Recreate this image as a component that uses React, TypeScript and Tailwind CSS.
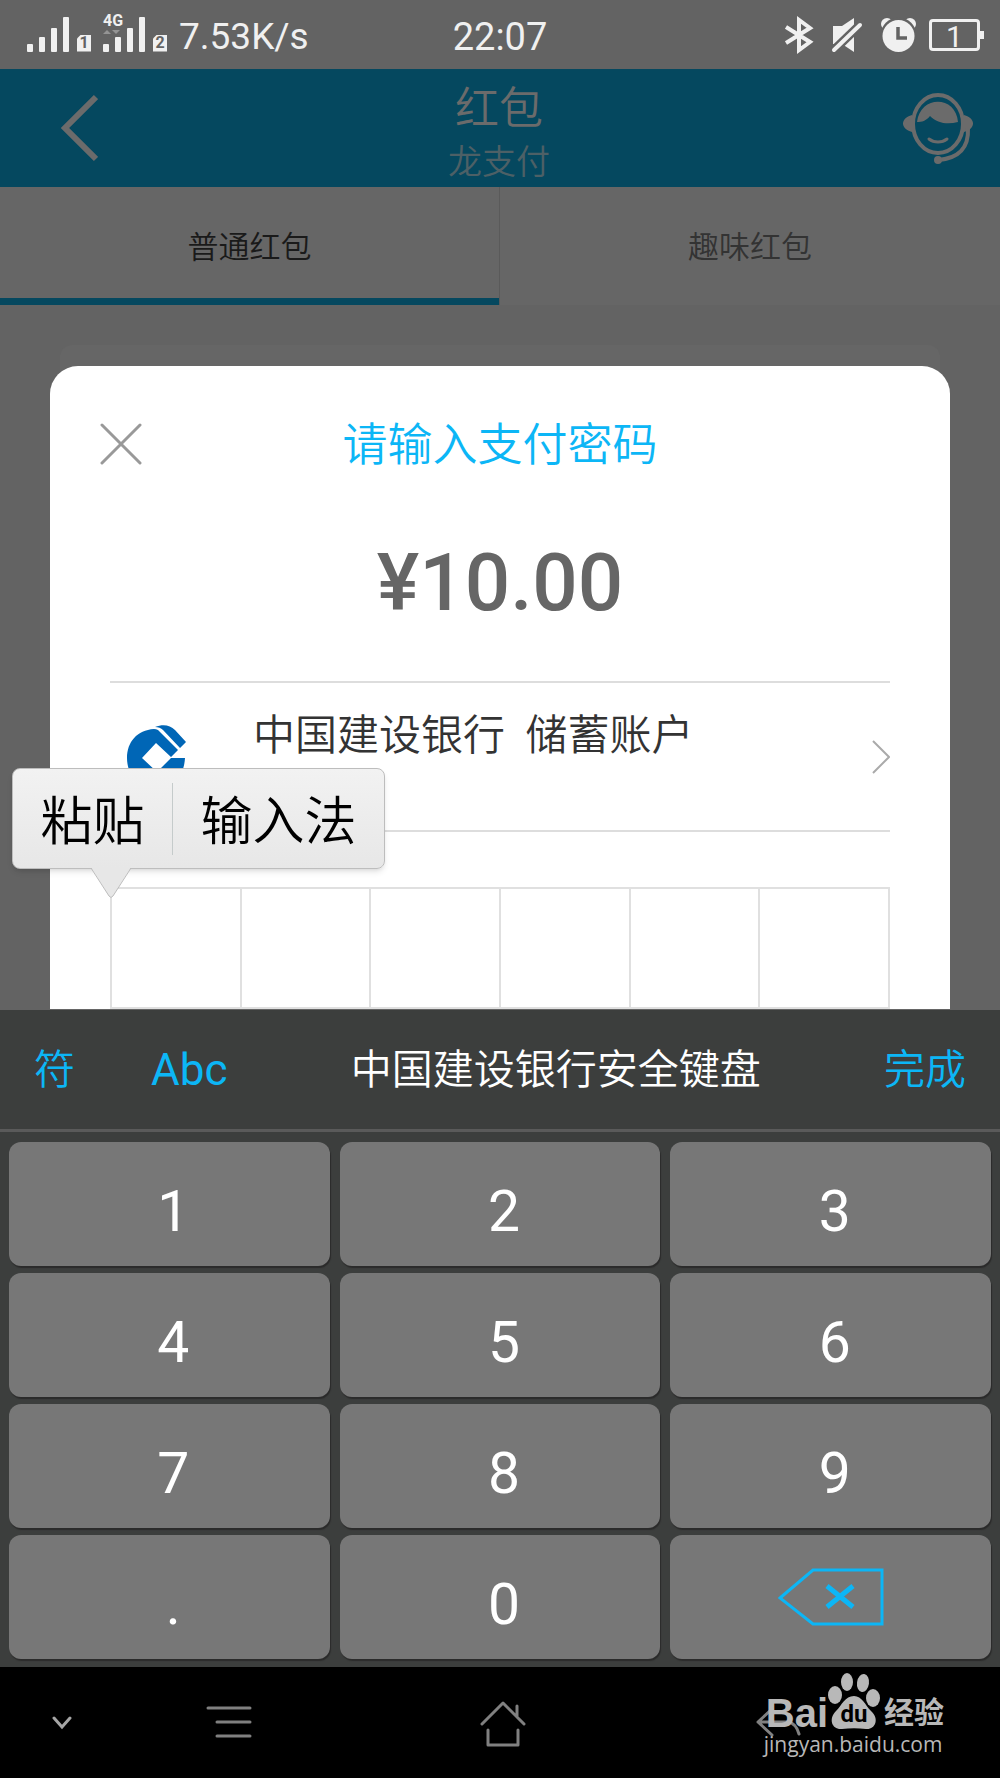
import { useState } from "react";

const KEYS = ["1", "2", "3", "4", "5", "6", "7", "8", "9", ".", "0"];
const PIN_LENGTH = 6;

function SignalBars({ sim, network }: { sim: string; network?: string }) {
    return (
        <span className="relative flex h-9 items-end gap-2">
            <svg width="42" height="36" viewBox="0 0 42 36" fill="currentColor" aria-hidden="true">
                <rect x="0" y="27" width="6" height="8" rx="1" />
                <rect x="12" y="20" width="6" height="15" rx="1" />
                <rect x="24" y="11" width="6" height="24" rx="1" />
                <rect x="36" y="0" width="6" height="35" rx="1" />
                {network && <path d="M0 17l4-4 4 4zM9 13h8l-4 4z" opacity="0.35" />}
            </svg>
            {network && (
                <span className="absolute -top-1 left-0 text-base leading-none font-bold">{network}</span>
            )}
            <span
                className="mb-px flex h-[17px] w-[14px] items-center justify-center bg-[#f0f0f0] text-base leading-none font-bold text-[#636363] [clip-path:polygon(4px_0,100%_0,100%_100%,0_100%,0_4px)]"
            >
                {sim}
            </span>
        </span>
    );
}

function StatusBar() {
    return (
        <div className="grid h-[69px] grid-cols-[1fr_auto_1fr] items-center bg-[#636363] px-4 text-[38px] leading-none font-normal text-[#f0f0f0]">
            <div className="flex items-center gap-3 pl-[11px]">
                <SignalBars sim="1" />
                <SignalBars sim="2" network="4G" />
                <span className="pt-1 text-[37px]">7.53K/s</span>
            </div>
            <span className="pt-1">22:07</span>
            <div className="flex items-center justify-end gap-4">
                <svg width="30" height="40" viewBox="0 0 30 40" fill="none" stroke="currentColor" strokeWidth="4" aria-label="Bluetooth">
                    <path d="M2 12l24 15-11 8V5l11 8L2 28" />
                </svg>
                <svg width="34" height="40" viewBox="0 0 34 40" fill="currentColor" aria-label="Muted">
                    <path d="M3 11h9L24 3v34L12 29H3z" />
                    <path d="M4 35L31 9" stroke="#636363" strokeWidth="9" />
                    <path d="M4 35L30 10" stroke="currentColor" strokeWidth="4" strokeLinecap="round" />
                </svg>
                <svg width="37" height="40" viewBox="0 0 37 40" aria-label="Alarm">
                    <circle cx="7" cy="9" r="6" fill="currentColor" />
                    <circle cx="30" cy="9" r="6" fill="currentColor" />
                    <circle cx="18.5" cy="20.500" r="18" fill="#636363" />
                    <circle cx="18.5" cy="21" r="16" fill="currentColor" />
                    <path d="M18 12v11h9" fill="none" stroke="#636363" strokeWidth="3.500" />
                </svg>
                <span className="-ml-1 flex items-center">
                    <span className="flex h-[32px] w-[51px] items-center justify-center rounded border-3 border-[#f0f0f0] pt-1 text-[30px]">
                        1
                    </span>
                    <span className="h-2 w-1 bg-[#f0f0f0]" />
                </span>
            </div>
        </div>
    );
}

function Header() {
    return (
        <header className="flex h-[118px] items-center justify-between bg-[#05485f] pr-[26px] pl-[60px] text-[#6b6b6b]">
            <button aria-label="返回" className="w-[70px]">
                <svg width="38" height="68" viewBox="0 0 38 68" fill="none" stroke="currentColor" strokeWidth="6">
                    <path d="M36 3L5 34l31 31" />
                </svg>
            </button>
            <div className="pt-2 pr-[34px] text-center">
                <h1 className="text-[44px] leading-[60px]">红包</h1>
                <p className="text-[34px] leading-[46px] text-[#4d6066]">龙支付</p>
            </div>
            <button aria-label="客服">
                <svg width="72" height="76" viewBox="0 0 72 76" fill="none" stroke="currentColor" strokeWidth="4">
                    <ellipse cx="36" cy="34" rx="25" ry="29" />
                    <path d="M10 25c-12 3-12 14 0 17zM62 25c12 3 12 14 0 17z" fill="currentColor" stroke="none" />
                    <path d="M15 32C18 5 54 5 56 32c-11 3-21 1-28-6-4 5-8 6-13 6z" fill="currentColor" stroke="none" />
                    <path d="M27 49c5 4 13 4 18 0" strokeWidth="3" strokeLinecap="round" />
                    <path d="M66 38c1 22-11 30-29 32" />
                    <circle cx="36" cy="70" r="4" fill="currentColor" stroke="none" />
                </svg>
            </button>
        </header>
    );
}

function Tabs() {
    return (
        <nav className="grid h-[118px] grid-cols-2 bg-[#666666] text-[31px]">
            <button className="border-r border-r-[#5a5a5a] text-[#1a1a1a]">
                <span className="flex h-full items-center justify-center border-b-7 border-b-[#05485f] pt-3">
                    普通红包
                </span>
            </button>
            <button className="pt-1 text-[#333333]">趣味红包</button>
        </nav>
    );
}

function BankLogo() {
    return (
        <svg width="60" height="64" viewBox="0 0 60 64" fill="#0066b6" aria-hidden="true">
            <path d="M27 4C10 5 0 17 0 33c0 17 12 30 29 30s28-12 29-30H44L30 47 15 33l14-15 15 14 7-7L31 5q-2-1-4-1z" />
            <path d="M28 2c8-3 15-2 20 3l11 12-6 6L36 5q-3-3-8-3z" />
        </svg>
    );
}

function PasteMenu() {
    return (
        <div className="absolute top-[402px] left-[-38px] flex h-[101px] w-[373px] items-center rounded-lg border border-[#bdbdbd] bg-linear-to-b from-[#f2f2f2] to-[#e7e7e7] text-[52px] leading-[60px] text-black shadow-md">
            <button className="h-18 w-[160px] border-r border-[#c5cbcb] pt-2">粘贴</button>
            <button className="flex-1 pt-2">输入法</button>
            <svg className="absolute top-[98px] left-[77px]" width="42" height="34" viewBox="0 0 42 34">
                <path d="M1 0h40L23 29q-2 3-4 0z" fill="#e7e7e7" />
                <path d="M1 1l18 28q2 3 4 0L41 1" fill="none" stroke="#bdbdbd" />
            </svg>
        </div>
    );
}

function PaymentDialog({ pin }: { pin: string }) {
    return (
        <section role="dialog" aria-label="请输入支付密码" className="relative rounded-t-[28px] bg-white pt-12">
            <div className="flex h-[60px] items-center justify-between px-[50px]">
                <button aria-label="关闭">
                    <svg width="42" height="42" viewBox="0 0 42 42" stroke="#999999" strokeWidth="3" strokeLinecap="round">
                        <path d="M2 2l38 38M40 2L2 40" />
                    </svg>
                </button>
                <h2 className="pt-1 pr-[42px] text-[45px] leading-[60px] text-[#0cb6f6]">请输入支付密码</h2>
                <span />
            </div>
            <p className="mt-[69px] text-center text-[80px] leading-[80px] font-medium text-[#666666]">¥10.00</p>
            <div className="mx-[60px] mt-[58px]">
                <button className="flex h-[151px] w-full items-center border-y-2 border-[#dddddd] pl-[17px] text-left">
                    <BankLogo />
                    <span className="mt-7 ml-[66px] flex-1 self-start text-[42px] leading-[50px] whitespace-pre text-[#333333]">
                        中国建设银行{"  "}储蓄账户
                    </span>
                    <svg width="18" height="34" viewBox="0 0 18 34" fill="none" stroke="#aaaaaa" strokeWidth="2">
                        <path d="M1 1l16 16L1 33" />
                    </svg>
                </button>
                <div className="mt-[55px] grid grid-cols-6 border-2 border-r-0 border-[#e0e0e0]">
                    {Array.from({ length: PIN_LENGTH }, (_, i) => (
                        <input
                            key={i}
                            type="password"
                            readOnly
                            value={pin[i] ?? ""}
                            aria-label={`密码第${i + 1}位`}
                            className="h-[118px] w-full min-w-0 border-r-2 border-[#e0e0e0] text-center text-[45px] outline-none"
                        />
                    ))}
                </div>
            </div>
            <PasteMenu />
        </section>
    );
}

function Keyboard({ onKey, onDelete }: { onKey: (key: string) => void; onDelete: () => void }) {
    return (
        <section className="bg-[#3c3e3d]">
            <div className="flex h-[122px] items-center border-b-3 border-[#5a5a5a] px-[34px] text-[41px] leading-[48px] text-[#0cb6f6]">
                <button className="w-[117px] text-left">符</button>
                <button className="text-[44px] font-normal">Abc</button>
                <span className="flex-1 text-center text-white">中国建设银行安全键盘</span>
                <button>完成</button>
            </div>
            <div className="grid grid-cols-3 gap-x-[10px] gap-y-[7px] px-[9px] pt-[10px] pb-2">
                {KEYS.map((key) => (
                    <button
                        key={key}
                        onClick={() => onKey(key)}
                        className="flex h-[124px] items-center justify-center rounded-[12px] bg-[#777777] pt-[14px] pl-2 text-[57px] leading-none font-normal text-white shadow-[1px_2px_1px_#2b2b2b]"
                    >
                        {key}
                    </button>
                ))}
                <button
                    aria-label="删除"
                    onClick={onDelete}
                    className="flex h-[124px] items-center justify-center rounded-[12px] bg-[#777777] shadow-[1px_2px_1px_#2b2b2b]"
                >
                    <svg width="106" height="58" viewBox="0 0 106 58" fill="none" stroke="#0cb6f6">
                        <path d="M2 30L35 2h69v54H35z" strokeWidth="3" />
                        <path d="M49 18l26 21M75 18L49 39" strokeWidth="5" />
                    </svg>
                </button>
            </div>
        </section>
    );
}

function Watermark() {
    return (
        <div className="absolute right-14 bottom-5 text-[#b8b8b8]">
            <div className="flex items-end pl-[2px]">
                <span className="font-[Liberation_Sans] text-[40px] leading-[34px] font-bold">Bai</span>
                <span className="relative">
                    <svg width="52" height="58" viewBox="0 0 52 58" fill="currentColor" aria-hidden="true">
                        <ellipse cx="7" cy="23" rx="7" ry="9" />
                        <ellipse cx="19" cy="10" rx="6" ry="9" />
                        <ellipse cx="35" cy="11" rx="6" ry="9" transform="rotate(8 35 11)" />
                        <ellipse cx="45" cy="26" rx="7" ry="9" />
                        <path d="M26 24c8 0 11 9 17 15 9 8 4 19-5 18-8-1-16-1-24 0-10 1-14-10-6-18 6-6 9-15 18-15z" />
                    </svg>
                    <span className="absolute inset-x-0 bottom-1 text-center text-2xl leading-none font-bold text-black">du</span>
                </span>
                <span className="ml-1 text-[30px] leading-[34px] font-bold">经验</span>
            </div>
            <p className="font-[Open_Sans] text-[21px] leading-7 font-normal">jingyan.baidu.com</p>
        </div>
    );
}

function NavigationBar() {
    return (
        <nav className="relative flex h-[111px] items-center bg-black pl-[52px] text-[#808080]">
            <button aria-label="收起键盘">
                <svg width="20" height="14" viewBox="0 0 20 14" fill="none" stroke="#a5a5a5" strokeWidth="3" strokeLinecap="round">
                    <path d="M2 2l8 9 8-9" />
                </svg>
            </button>
            <button aria-label="菜单" className="ml-[134px]">
                <svg width="46" height="34" viewBox="0 0 46 34" stroke="currentColor" strokeWidth="3" strokeLinecap="round">
                    <path d="M2 2h42M11 16h33M11 30h33" />
                </svg>
            </button>
            <button aria-label="主页" className="ml-[228px]">
                <svg width="46" height="50" viewBox="0 0 46 50" fill="none" stroke="currentColor" strokeWidth="3" strokeLinecap="round" strokeLinejoin="round">
                    <path d="M2 26L23 5l21 21M37 18V8M8 32v15h30V32" />
                </svg>
            </button>
            <button aria-label="后退" className="ml-[230px]">
                <svg width="52" height="32" viewBox="0 0 52 32" fill="none" stroke="currentColor" strokeWidth="3" strokeLinecap="round" strokeLinejoin="round">
                    <path d="M16 2L2 15l14 13M2 15h30q8 1 11 12" />
                </svg>
            </button>
            <Watermark />
        </nav>
    );
}

export default function App() {
    const [pin, setPin] = useState("");

    const handleKey = (key: string) => {
        if (pin.length < PIN_LENGTH) setPin(pin + key);
    };

    return (
        <main className="flex min-h-screen flex-col bg-[#636363] font-['Roboto','Noto_Sans_CJK_SC',sans-serif] font-[350]">
            <StatusBar />
            <Header />
            <Tabs />
            {/* Dimmed page card behind the payment dialog */}
            <div className="relative flex-1 px-[50px] pt-[61px]">
                <div className="absolute inset-x-[60px] top-10 bottom-0 rounded-t-xl bg-[#666666]" />
                <PaymentDialog pin={pin} />
            </div>
            <Keyboard onKey={handleKey} onDelete={() => setPin(pin.slice(0, -1))} />
            <NavigationBar />
        </main>
    );
}
